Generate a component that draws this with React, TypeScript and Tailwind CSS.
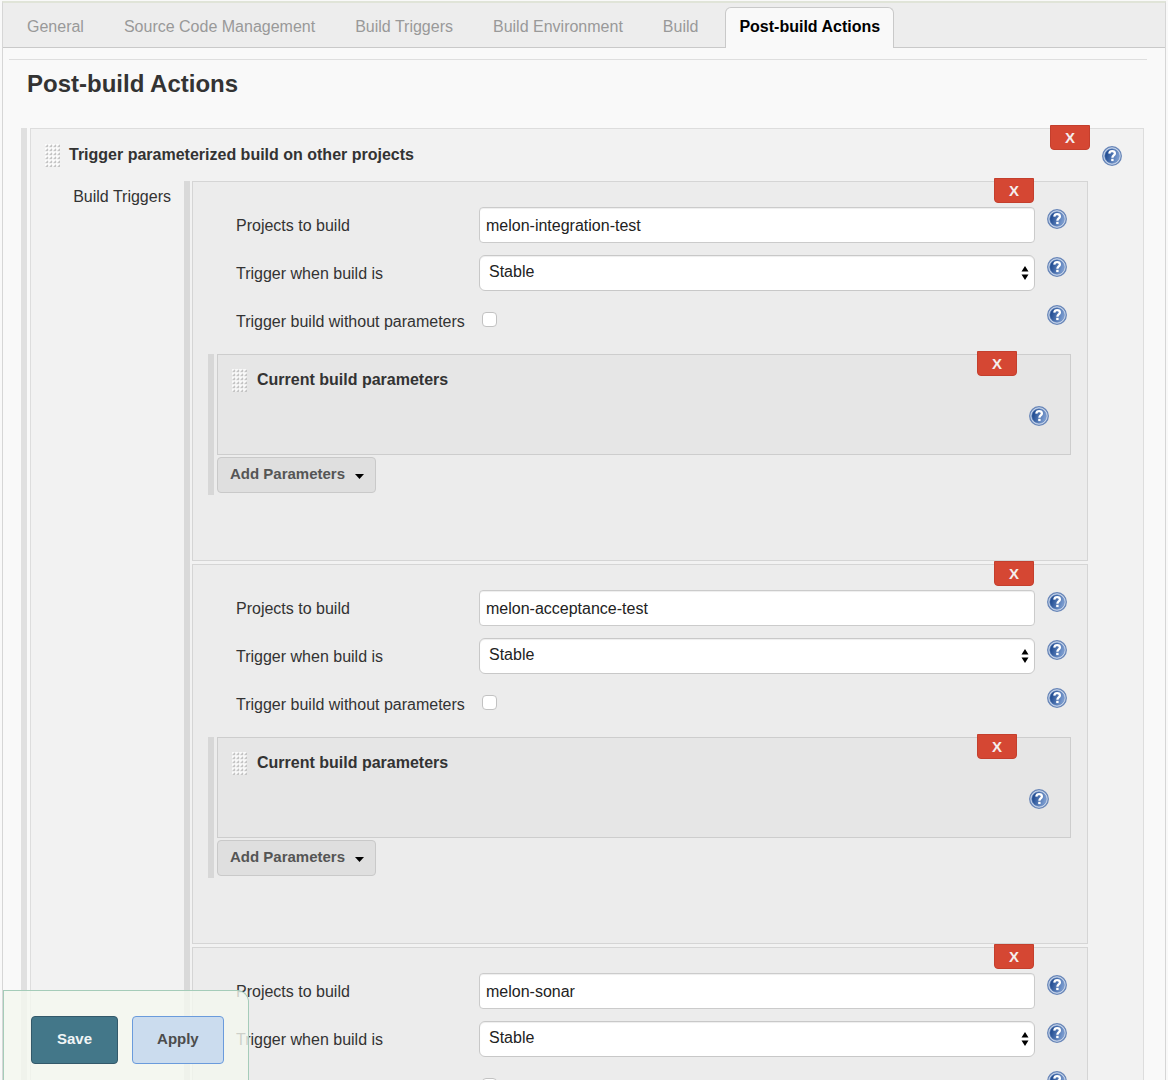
import { useId, useState } from "react";
import type { ReactNode } from "react";

const tabs = [
  "General",
  "Source Code Management",
  "Build Triggers",
  "Build Environment",
  "Build",
  "Post-build Actions",
];

const triggers = ["melon-integration-test", "melon-acceptance-test", "melon-sonar"];

function HelpButton({ topic }: { topic: string }) {
  const id = useId();
  return (
    <button type="button" aria-label={`Help for ${topic}`} className="block size-5 shrink-0">
      <svg viewBox="0 0 20 20" className="size-5" aria-hidden="true">
        <defs>
          <linearGradient id={id} x1="0" y1="0.2" x2="1" y2="0.5">
            <stop offset="0.1" stopColor="#1f4a90" />
            <stop offset="1" stopColor="#7e9fd2" />
          </linearGradient>
        </defs>
        <circle cx="10" cy="10" r="9.3" fill="#ccd9ec" stroke="#6886b8" strokeWidth="1.3" />
        <circle cx="10" cy="10" r="7.3" fill={`url(#${id})`} stroke="#6688bf" strokeWidth="0.6" />
        <path
          d="M7.3 7.6C7.5 6 8.6 5.2 10.1 5.2c1.7 0 2.8.9 2.8 2.3 0 2-2.5 2-2.5 4.2"
          fill="none"
          stroke="#fff"
          strokeWidth="2.3"
        />
        <rect x="9.2" y="12.8" width="2.4" height="2.3" fill="#fff" />
      </svg>
    </button>
  );
}

function DeleteButton({ label }: { label: string }) {
  return (
    <button
      type="button"
      aria-label={label}
      className="absolute -top-1 right-[53px] h-[25px] w-10 rounded-b-[4px] border border-[#c43f2d] bg-[#d54733] text-center text-[15px] leading-5 font-bold text-[#f4eeee]"
    >
      X
    </button>
  );
}

function Grip() {
  return (
    <svg viewBox="0 0 15 23" className="h-[23px] w-[15px] shrink-0" aria-hidden="true">
      <rect width="15" height="23" fill="#fff" opacity="0.75" />
      {[0, 1, 2, 3, 4, 5].map((r) =>
        [0, 1, 2, 3].map((c) => (
          <path
            key={`${r}-${c}`}
            d={`M${c * 4 + 0.6} ${r * 4 + 2.8}h2.2v-2z`}
            fill="#b4b4b4"
            stroke="#c0c0c0"
            strokeWidth="0.6"
          />
        )),
      )}
    </svg>
  );
}

function Row({ label, htmlFor, children }: { label: string; htmlFor: string; children: ReactNode }) {
  return (
    <div className="grid h-12 grid-cols-[243px_1fr_20px] items-start">
      <label htmlFor={htmlFor} className="pt-[9px] leading-5">
        {label}
      </label>
      <div className="mr-3">{children}</div>
      <div className="pt-0.5">
        <HelpButton topic={label} />
      </div>
    </div>
  );
}

function Trigger({ project }: { project: string }) {
  const id = useId();
  return (
    <section className="relative h-[380px] border border-[#d5d5d5] bg-[#ececec]">
      <DeleteButton label="Delete trigger" />
      <div className="pt-[25px] pr-5 pl-[43px]">
        <Row label="Projects to build" htmlFor={`${id}-p`}>
          <input
            id={`${id}-p`}
            type="text"
            defaultValue={project}
            className="block h-9 w-full rounded-[4px] border border-[#cbcbcb] bg-white px-1.5 pt-px text-[#222] shadow-[inset_0_1px_1px_rgba(0,0,0,0.07)]"
          />
        </Row>
        <Row label="Trigger when build is" htmlFor={`${id}-s`}>
          <div className="relative">
            <select
              id={`${id}-s`}
              className="block h-9 w-full appearance-none rounded-md border border-[#c8c8c8] bg-white px-[9px] pb-0.5 text-[#222] shadow-[inset_0_1px_1px_rgba(0,0,0,0.07)]"
            >
              <option>Stable</option>
              <option>Unstable</option>
              <option>Failed</option>
            </select>
            <svg
              viewBox="0 0 8 14"
              className="pointer-events-none absolute top-[11px] right-[6px] h-3.5 w-2"
              aria-hidden="true"
            >
              <path d="M4 0l3.5 5.6h-7zM4 14L.5 8.4h7z" fill="#000" />
            </svg>
          </div>
        </Row>
        <Row label="Trigger build without parameters" htmlFor={`${id}-c`}>
          <input
            id={`${id}-c`}
            type="checkbox"
            className="mt-[9px] ml-[3px] block size-[15px] appearance-none rounded-[4px] border border-[#c2c2c2] bg-white checked:bg-[#437789]"
          />
        </Row>
      </div>
      <div className="mt-[3px] mr-4 ml-[15px] border-l-[6px] border-[#d7d7d7] pb-0.5 pl-[3px]">
        <div className="relative h-[101px] border border-[#cdcdcd] bg-[#e6e6e6]">
          <DeleteButton label="Delete current build parameters" />
          <div className="flex items-center gap-2.5 pt-[13px] pl-3.5">
            <Grip />
            <h3 className="font-bold">Current build parameters</h3>
          </div>
          <div className="mt-3.5 mr-[21px] flex justify-end">
            <HelpButton topic="Current build parameters" />
          </div>
        </div>
        <button
          type="button"
          className="mt-0.5 flex h-9 items-center gap-2.5 rounded-[4px] border border-[#c9c9c9] bg-[#dfdfdf] pr-[11px] pb-0.5 pl-3 text-[15px] font-bold text-[#555]"
        >
          Add Parameters
          <svg viewBox="0 0 9 5" className="mt-1 h-[5px] w-[9px]" aria-hidden="true">
            <path d="M0 0h9L4.5 5z" fill="#000" />
          </svg>
        </button>
      </div>
    </section>
  );
}

export default function App() {
  const [active, setActive] = useState("Post-build Actions");
  return (
    <div className="h-screen overflow-y-auto bg-[#f9f9f9] px-0.5 pt-px font-['Liberation_Sans',Arial,sans-serif] text-base leading-6 text-[#333] [scrollbar-width:none]">
      <div className="min-h-full border-x border-t-2 border-x-[#d6d6d6] border-t-[#e0e4d8]">
        <nav className="flex h-[45px] items-end border-b border-[#c9c9c9] bg-[#ededed] pl-[11px]">
          {tabs.map((t) => (
            <button
              key={t}
              type="button"
              onClick={() => setActive(t)}
              className={
                t === active
                  ? "-mb-px h-[41px] shrink-0 rounded-t-md border border-b-0 border-[#c9c9c9] bg-[#f9f9f9] px-[13px] pb-0.5 font-bold text-black"
                  : "mr-3 h-10 shrink-0 pr-[15px] pl-[13px] text-[#999]"
              }
            >
              {t}
            </button>
          ))}
        </nav>
        <main className="pt-[11px] pr-[18px] pl-1.5">
          <hr className="border-[#dedede]" />
          <h1 className="mt-2 ml-[18px] text-2xl leading-8 font-bold">Post-build Actions</h1>
          <div className="mt-7 mr-[3px] ml-3 border-l-[6px] border-[#e0e0e0] pl-[3px]">
            <section className="relative border border-[#dddddd] bg-[#f2f2f2] pb-24">
              <DeleteButton label="Delete post-build action" />
              <div className="flex h-[52px] items-start pt-3.5 pr-[21px] pl-3.5">
                <div className="flex grow items-center gap-[9px]">
                  <Grip />
                  <h2 className="font-bold">Trigger parameterized build on other projects</h2>
                </div>
                <div className="pt-[3px]">
                  <HelpButton topic="Trigger parameterized build on other projects" />
                </div>
              </div>
              <div className="grid grid-cols-[153px_1fr] pr-[55px]">
                <div className="pt-1 pr-[13px] text-right">Build Triggers</div>
                <div className="flex flex-col gap-[3px] border-l-[6px] border-[#d9d9d9] pl-0.5">
                  {triggers.map((p) => (
                    <Trigger key={p} project={p} />
                  ))}
                </div>
              </div>
            </section>
          </div>
        </main>
      </div>
      <footer className="fixed bottom-0 left-[3px] flex h-[90px] gap-3.5 rounded-tr-xl border border-b-0 border-[#a5ccb9] bg-[#f4f8ef]/80 pt-[25px] pr-6 pl-[27px] text-[15px] font-bold">
        <button
          type="submit"
          className="h-12 rounded-[4px] border border-[#33596a] bg-[#437789] px-[25px] pb-0.5 text-[#f1f5f6]"
        >
          Save
        </button>
        <button
          type="button"
          className="h-12 rounded-[4px] border border-[#6a9bdc] bg-[#cbdcee] px-6 pb-0.5 text-[#4c4c4c]"
        >
          Apply
        </button>
      </footer>
    </div>
  );
}
